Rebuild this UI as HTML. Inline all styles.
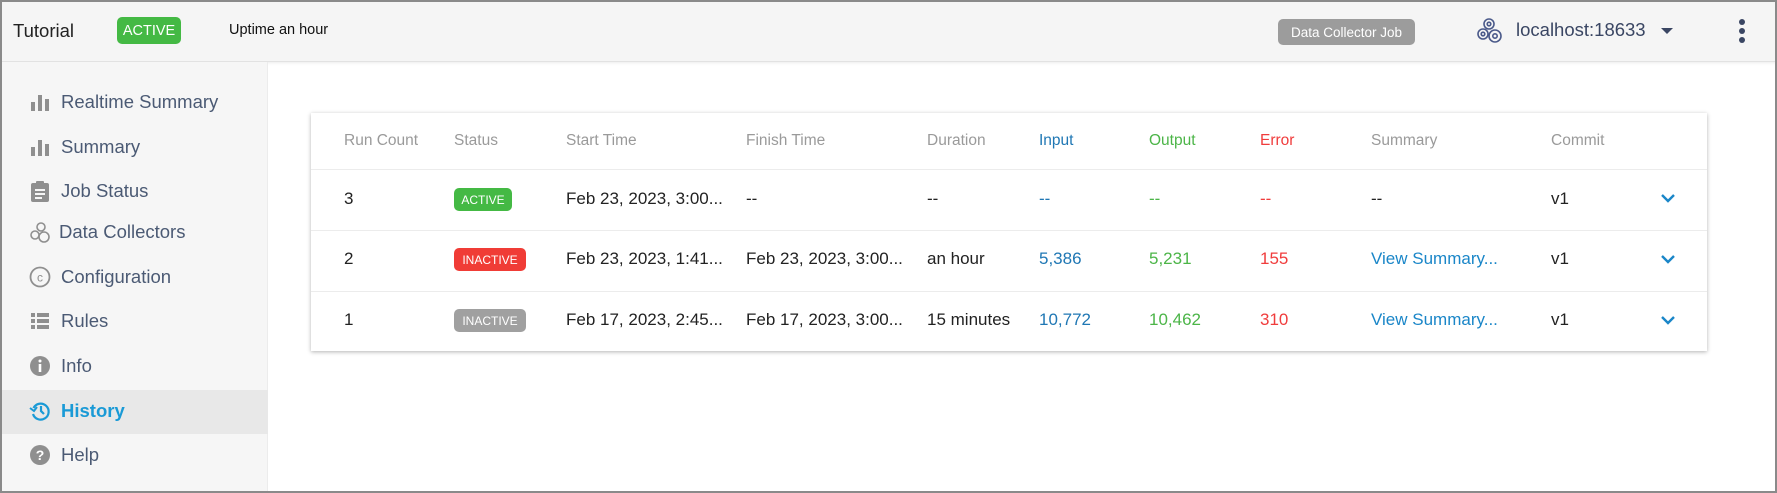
<!DOCTYPE html>
<html><head><meta charset="utf-8"><style>
*{margin:0;padding:0;box-sizing:border-box}
body{width:1777px;height:493px;overflow:hidden;font-family:"Liberation Sans",sans-serif;background:#fff;position:relative}
.frame{position:absolute;left:0;top:0;width:1777px;height:493px;border:2px solid #8a8a8a;z-index:10;pointer-events:none}
.hdr{position:absolute;left:0;top:0;width:1777px;height:62px;background:#f5f5f5;border-bottom:1px solid #e2e2e2;box-shadow:0 1px 3px rgba(0,0,0,.08)}
.a{position:absolute;white-space:nowrap}
.side{position:absolute;left:0;top:62px;width:268px;height:431px;background:#f6f6f6;border-right:1px solid #ececec}
.nav{position:absolute;left:61px;font-size:18.5px;color:#4b5a74;line-height:22px}
.ic{position:absolute;left:29px;width:22px;height:22px}
.hl{position:absolute;left:2px;top:390px;width:266px;height:44px;background:#e8e8e8}
.tbl{position:absolute;left:311px;top:113px;width:1396px;height:238px;background:#fff;box-shadow:0 1px 4px rgba(0,0,0,.3)}
.line{position:absolute;left:311px;width:1396px;height:1px;background:#ececec}
.th{position:absolute;font-size:15.5px;color:#9a9a9a;top:132px}
.td{position:absolute;font-size:17px;color:#222;white-space:nowrap}
.b{position:absolute;left:454px;height:23px;border-radius:5px;color:#fff;font-size:12px;display:flex;align-items:center;justify-content:center}
.chev{position:absolute;left:1660px;width:16px;height:12px}
.badge{display:flex;align-items:center;justify-content:center}
</style></head><body>
<div class="hdr"></div>
<div class="a" style="left:13px;top:20px;font-size:18.5px;color:#222">Tutorial</div>
<div class="a badge" style="left:117px;top:17px;width:64px;height:27px;background:#44b944;border-radius:5px;color:#fff;font-size:14.5px">ACTIVE</div>
<div class="a" style="left:229px;top:22px;font-size:14.5px;color:#111">Uptime an hour</div>
<div class="a badge" style="left:1278px;top:19px;width:137px;height:26px;background:#9c9c9c;border-radius:5px;color:#fff;font-size:13.5px">Data Collector Job</div>
<svg class="a" style="left:1475px;top:17px" width="30" height="28" viewBox="0 0 30 28" fill="none" stroke="#4b5a8a" stroke-width="1.6"><circle cx="14" cy="7" r="5"/><circle cx="8" cy="17" r="5"/><circle cx="20" cy="19" r="6"/><circle cx="14" cy="7" r="1.8"/><circle cx="8" cy="17" r="1.8"/><circle cx="20" cy="19" r="2.2"/></svg>
<div class="a" style="left:1516px;top:19px;font-size:18.5px;color:#3a4663">localhost:18633</div>
<div class="a" style="left:1661px;top:28px;width:0;height:0;border-left:6px solid transparent;border-right:6px solid transparent;border-top:6px solid #3a4663"></div>
<div class="a" style="left:1739px;top:19px;width:6px;height:6px;border-radius:50%;background:#3a4663"></div>
<div class="a" style="left:1739px;top:28px;width:6px;height:6px;border-radius:50%;background:#3a4663"></div>
<div class="a" style="left:1739px;top:37px;width:6px;height:6px;border-radius:50%;background:#3a4663"></div>

<div class="side"></div>
<div class="hl"></div>
<svg class="ic" style="top:91px" viewBox="0 0 22 22" fill="#8f8f8f"><rect x="2" y="11" width="4" height="9"/><rect x="9" y="4" width="4" height="16"/><rect x="16" y="8" width="4" height="12"/></svg>
<div class="nav" style="top:91px">Realtime Summary</div>
<svg class="ic" style="top:136px" viewBox="0 0 22 22" fill="#8f8f8f"><rect x="2" y="11" width="4" height="9"/><rect x="9" y="4" width="4" height="16"/><rect x="16" y="8" width="4" height="12"/></svg>
<div class="nav" style="top:136px">Summary</div>
<svg class="ic" style="top:180px" viewBox="0 0 22 22"><rect x="2" y="3" width="18" height="19" rx="2" fill="#8f8f8f"/><rect x="7" y="1" width="8" height="4" rx="1" fill="#8f8f8f"/><rect x="6" y="9" width="10" height="2" fill="#f6f6f6"/><rect x="6" y="13" width="10" height="2" fill="#f6f6f6"/><rect x="6" y="17" width="7" height="2" fill="#f6f6f6"/></svg>
<div class="nav" style="top:180px">Job Status</div>
<svg class="ic" style="top:221px" viewBox="0 0 22 22" fill="none" stroke="#8f8f8f" stroke-width="1.6"><circle cx="12" cy="6" r="4"/><circle cx="6" cy="14" r="4"/><circle cx="15" cy="16" r="5"/></svg>
<div class="nav" style="top:221px;left:59px">Data Collectors</div>
<svg class="ic" style="top:266px" viewBox="0 0 22 22" fill="none" stroke="#8f8f8f" stroke-width="1.8"><circle cx="11" cy="11" r="9.5"/><text x="11" y="15.5" font-size="12" font-family="Liberation Sans" text-anchor="middle" fill="#8f8f8f" stroke="none">c</text></svg>
<div class="nav" style="top:266px">Configuration</div>
<svg class="ic" style="top:310px" viewBox="0 0 22 22" fill="#8f8f8f"><rect x="2" y="3" width="4" height="4"/><rect x="8" y="3" width="12" height="4"/><rect x="2" y="9" width="4" height="4"/><rect x="8" y="9" width="12" height="4"/><rect x="2" y="15" width="4" height="4"/><rect x="8" y="15" width="12" height="4"/></svg>
<div class="nav" style="top:310px">Rules</div>
<svg class="ic" style="top:355px" viewBox="0 0 22 22"><circle cx="11" cy="11" r="10" fill="#8f8f8f"/><rect x="9.7" y="9" width="2.6" height="8" fill="#fff"/><circle cx="11" cy="6" r="1.5" fill="#fff"/></svg>
<div class="nav" style="top:355px">Info</div>
<svg class="ic" style="top:400px" viewBox="0 0 22 22" fill="none" stroke="#1a9ad6" stroke-width="2.2"><path d="M4.5 8A8 8 0 1 1 4 14"/><path d="M1 8l4 3 3-4" stroke-width="2"/><path d="M12 6v5l3 3"/></svg>
<div class="nav" style="top:400px;color:#1a9ad6;font-weight:bold">History</div>
<svg class="ic" style="top:444px" viewBox="0 0 22 22"><circle cx="11" cy="11" r="10" fill="#8f8f8f"/><text x="11" y="16" font-size="14" font-weight="bold" font-family="Liberation Sans" text-anchor="middle" fill="#fff">?</text></svg>
<div class="nav" style="top:444px">Help</div>

<div class="tbl"></div>
<div class="line" style="top:169px"></div>
<div class="line" style="top:230px"></div>
<div class="line" style="top:291px"></div>
<div class="th" style="left:344px">Run Count</div>
<div class="th" style="left:454px">Status</div>
<div class="th" style="left:566px">Start Time</div>
<div class="th" style="left:746px">Finish Time</div>
<div class="th" style="left:927px">Duration</div>
<div class="th" style="left:1039px;color:#1f77b4">Input</div>
<div class="th" style="left:1149px;color:#4cb548">Output</div>
<div class="th" style="left:1260px;color:#f03c3c">Error</div>
<div class="th" style="left:1371px">Summary</div>
<div class="th" style="left:1551px">Commit</div>

<div class="td" style="left:344px;top:189px">3</div>
<div class="b" style="top:188px;width:58px;background:#44b944">ACTIVE</div>
<div class="td" style="left:566px;top:189px">Feb 23, 2023, 3:00...</div>
<div class="td" style="left:746px;top:189px">--</div>
<div class="td" style="left:927px;top:189px">--</div>
<div class="td" style="left:1039px;top:189px;color:#1f77b4">--</div>
<div class="td" style="left:1149px;top:189px;color:#4cb548">--</div>
<div class="td" style="left:1260px;top:189px;color:#f03c3c">--</div>
<div class="td" style="left:1371px;top:189px">--</div>
<div class="td" style="left:1551px;top:189px">v1</div>

<div class="td" style="left:344px;top:249px">2</div>
<div class="b" style="top:248px;width:72px;background:#f03c36">INACTIVE</div>
<div class="td" style="left:566px;top:249px">Feb 23, 2023, 1:41...</div>
<div class="td" style="left:746px;top:249px">Feb 23, 2023, 3:00...</div>
<div class="td" style="left:927px;top:249px">an hour</div>
<div class="td" style="left:1039px;top:249px;color:#1f77b4">5,386</div>
<div class="td" style="left:1149px;top:249px;color:#4cb548">5,231</div>
<div class="td" style="left:1260px;top:249px;color:#f03c3c">155</div>
<div class="td" style="left:1371px;top:249px;color:#1a86c8">View Summary...</div>
<div class="td" style="left:1551px;top:249px">v1</div>

<div class="td" style="left:344px;top:310px">1</div>
<div class="b" style="top:309px;width:72px;background:#a0a0a0">INACTIVE</div>
<div class="td" style="left:566px;top:310px">Feb 17, 2023, 2:45...</div>
<div class="td" style="left:746px;top:310px">Feb 17, 2023, 3:00...</div>
<div class="td" style="left:927px;top:310px">15 minutes</div>
<div class="td" style="left:1039px;top:310px;color:#1f77b4">10,772</div>
<div class="td" style="left:1149px;top:310px;color:#4cb548">10,462</div>
<div class="td" style="left:1260px;top:310px;color:#f03c3c">310</div>
<div class="td" style="left:1371px;top:310px;color:#1a86c8">View Summary...</div>
<div class="td" style="left:1551px;top:310px">v1</div>

<svg class="chev" style="top:192px" viewBox="0 0 16 12"><path d="M2 3l6 6 6-6" fill="none" stroke="#1a86c8" stroke-width="2.4"/></svg>
<svg class="chev" style="top:253px" viewBox="0 0 16 12"><path d="M2 3l6 6 6-6" fill="none" stroke="#1a86c8" stroke-width="2.4"/></svg>
<svg class="chev" style="top:314px" viewBox="0 0 16 12"><path d="M2 3l6 6 6-6" fill="none" stroke="#1a86c8" stroke-width="2.4"/></svg>
<div class="frame"></div>
</body></html>
